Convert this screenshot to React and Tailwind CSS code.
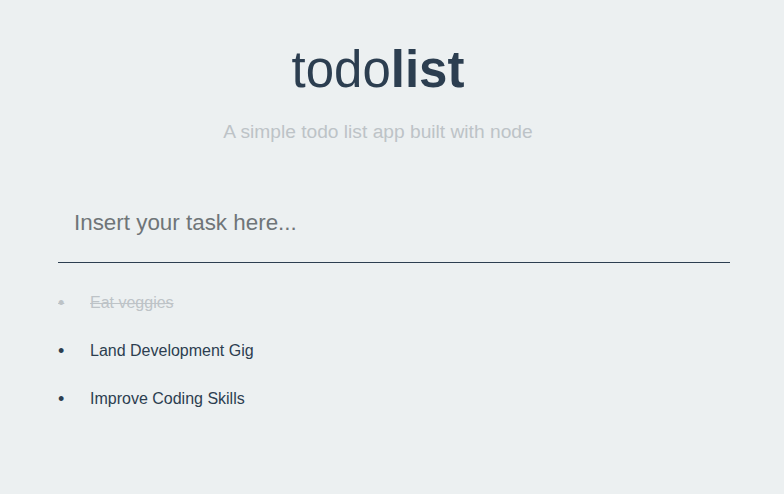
import { useState } from 'react';

export default function App() {
    const [todos] = useState([
        { id: 1, text: 'Eat veggies', done: true },
        { id: 2, text: 'Land Development Gig', done: false },
        { id: 3, text: 'Improve Coding Skills', done: false },
    ]);

    return (
        <div className="min-h-[494px] bg-[#ecf0f1] font-['Liberation_Sans',Arial,sans-serif] text-[#2c3e50]">
            <div className="ml-[58px] w-[672px] pt-[40px]">
                {/* Header */}
                <div className="w-[640px] text-center">
                    <h1 className="text-[51px] leading-[60px]">
                        todo<span className="font-bold">list</span>
                    </h1>
                    <p className="mt-[18px] text-[19.2px] leading-[27px] text-[#bdc3c7]">A simple todo list app built with node</p>
                </div>

                {/* Input */}
                <input
                    className="mt-[45px] block w-full h-[73px] pt-[2px] pb-[8px] border-b border-[#2c3e50] bg-transparent px-[16px] text-[22.4px] placeholder:text-[#6f7578] outline-none"
                    placeholder="Insert your task here..."
                />

                {/* List */}
                <ul className="mt-[16px]">
                    {todos.map(t => (
                        <li key={t.id} className={`flex items-center h-[48px] text-[16px] ${t.done ? 'text-[#bdc3c7] line-through' : ''}`}>
                            <span className="w-[32px] text-[18px] leading-none">•</span>
                            <span>{t.text}</span>
                        </li>
                    ))}
                </ul>
            </div>
        </div>
    );
}
